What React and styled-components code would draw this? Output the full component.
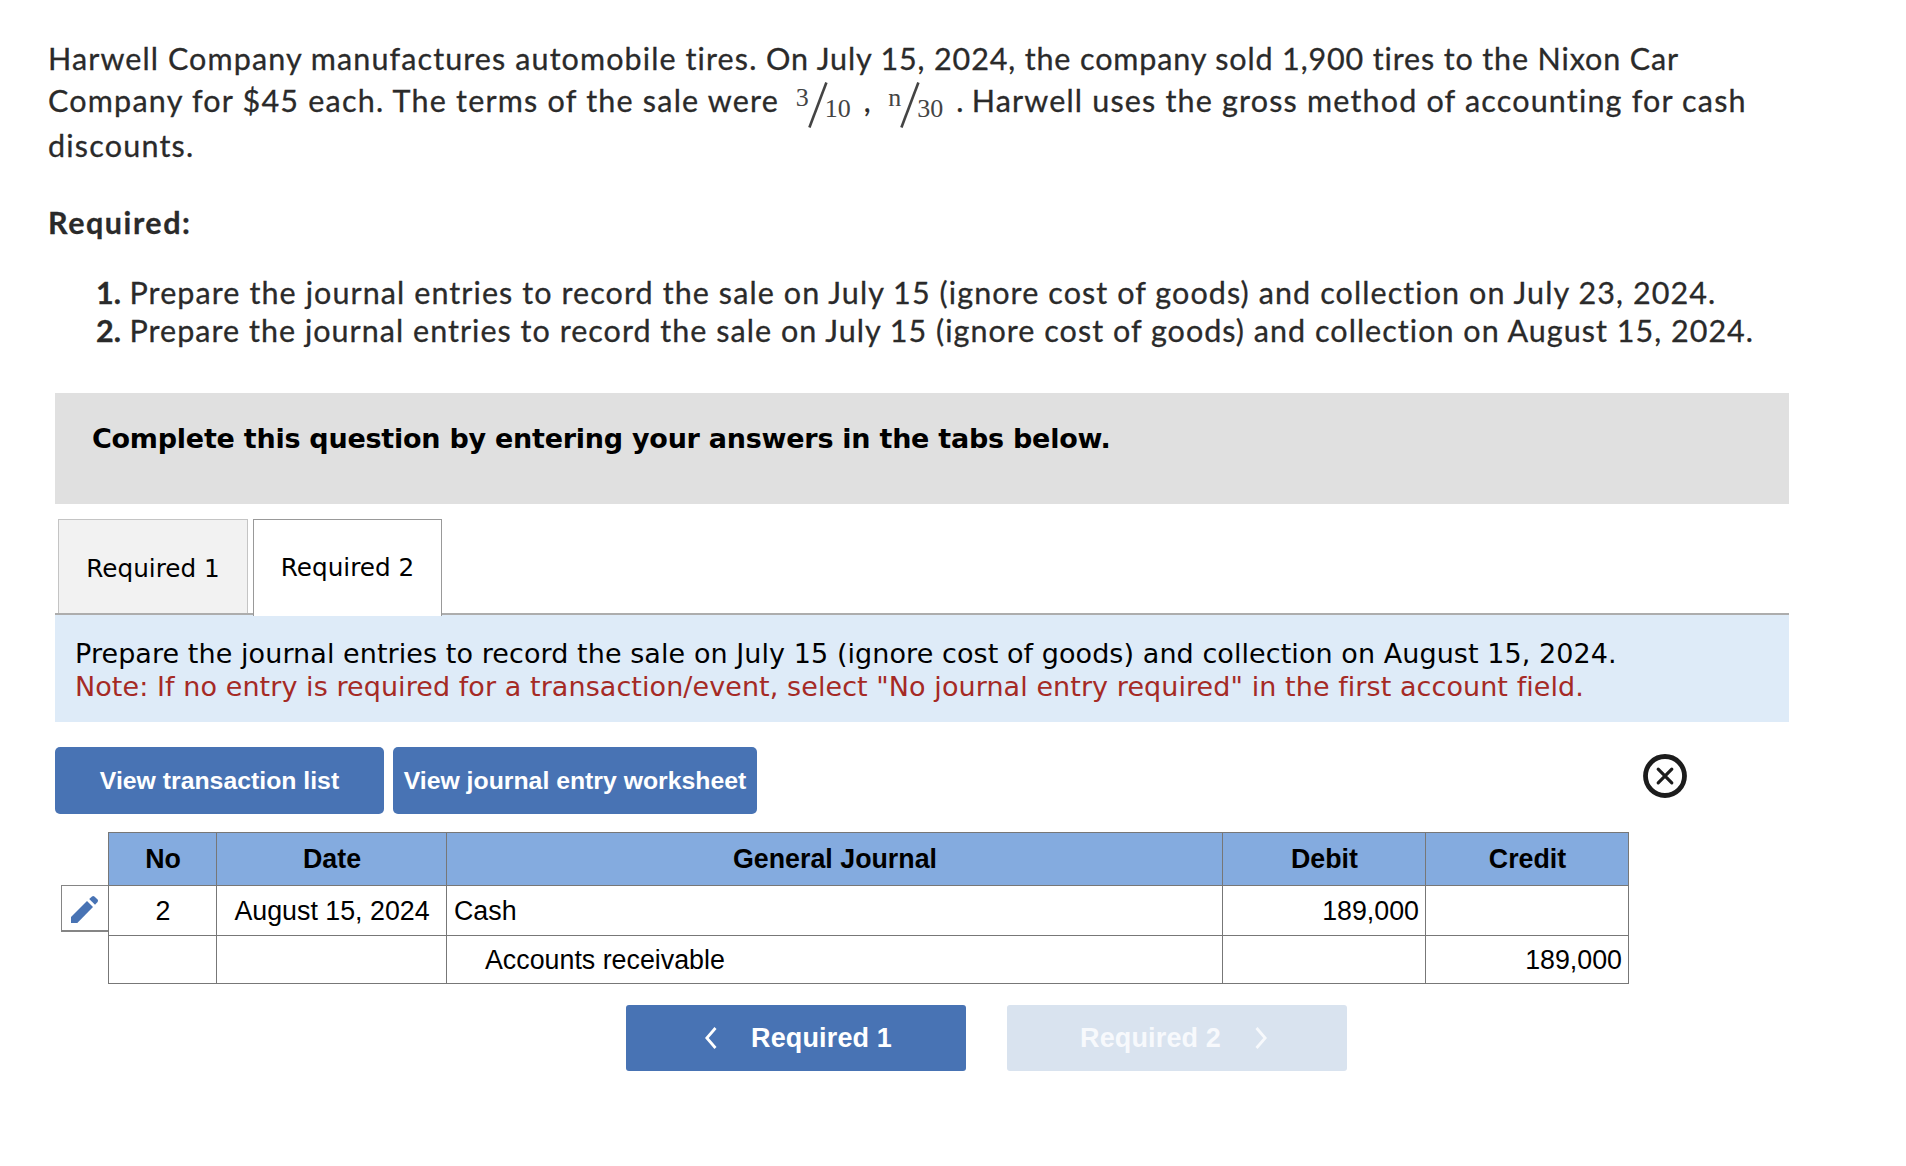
import React from 'react';
import styled, { createGlobalStyle, css } from 'styled-components';

const GlobalStyle = createGlobalStyle`
  *, *::before, *::after {
    box-sizing: border-box;
  }
  body {
    margin: 0;
    background: #fff;
  }
`;

const lato = "Lato, 'Open Sans', sans-serif";
const verdana = "Verdana, 'DejaVu Sans', sans-serif";
const arial = "Arial, 'Liberation Sans', sans-serif";

const Page = styled.main`
  width: 1906px;
  min-height: 1166px;
  padding: 37px 117px 0 48px;
  background: #fff;
  color: #000;
`;

const Question = styled.section`
  font-family: ${lato};
  font-size: 30.5px;
  color: #2a2a2a;
  -webkit-text-stroke: 0.3px #2a2a2a;
`;

const Line = styled.div`
  display: flex;
  align-items: flex-start;
  height: ${({ $height }) => $height}px;
  line-height: ${({ $height }) => $height}px;
  white-space: pre;
`;

const Run = styled.span`
  letter-spacing: ${({ $tracking }) => $tracking}px;
`;

const Punctuation = styled.span`
  width: ${({ $width }) => $width}px;
  padding-left: 13px;
`;

const FractionWrapper = styled.span`
  display: flex;
  align-items: flex-start;
  margin: 2.5px 0 0 ${({ $lead }) => $lead || 0}px;
  font-family: 'Liberation Serif', serif;
  font-size: 26px;
  line-height: 30px;
  color: #444;
  -webkit-text-stroke: 0;

  svg {
    margin: 0 -3px 0 -1px;
  }
`;

const Numerator = styled.span`
  margin-top: 1px;
`;

const Denominator = styled.span`
  margin-top: 12px;
`;

const Required = styled.h2`
  margin: 34px 0 32px;
  font-size: 30.5px;
  font-weight: 700;
  line-height: 40px;
  letter-spacing: 1.55px;
`;

const Steps = styled.ol`
  margin: 0 0 44px;
  padding: 0;
  list-style: none;
`;

const Step = styled.li`
  display: flex;
  height: 37.5px;
  line-height: 37.5px;
  white-space: pre;
`;

const StepNumber = styled.b`
  width: 73px;
  margin-right: 8.5px;
  text-align: right;
`;

const Answer = styled.section`
  width: 1734px;
  margin-left: 7px;
`;

const Banner = styled.div`
  height: 111px;
  padding: 26px 37px;
  background: #e0e0e0;
  font: bold 27px/40px ${verdana};
  letter-spacing: -0.25px;
`;

const Tabs = styled.div`
  display: flex;
  gap: 5px;
  height: 111px;
  padding: 15px 0 0 3px;
  border-bottom: 2px solid #adadad;
`;

const Tab = styled.button`
  width: 190px;
  height: 94px;
  padding: 3px 0 0;
  border: 1px solid #c4c4c4;
  border-bottom: none;
  background: #f2f2f2;
  color: #000;
  font: 24.7px ${verdana};
  ${({ $active }) =>
    $active &&
    css`
      height: 97px;
      padding-bottom: 4px;
      width: 189px;
      border-color: #999;
      background: #fff;
    `}
`;

const Instructions = styled.div`
  height: 107px;
  padding: 22px 20px 0;
  background: #deebf8;
  font: 27px/33px ${verdana};
  letter-spacing: 0.07px;
  white-space: nowrap;
`;

const Note = styled.div`
  color: #a52a25;
`;

const Toolbar = styled.div`
  display: flex;
  gap: 9px;
  margin-top: 25px;
`;

const Button = styled.button`
  display: flex;
  align-items: center;
  justify-content: center;
  width: ${({ $width }) => $width}px;
  height: 67px;
  padding: 0;
  border: none;
  border-radius: 5px;
  background: #4873b4;
  color: #fff;
  font: bold 24.8px ${arial};
`;

const CloseButton = styled.button`
  width: 44px;
  height: 44px;
  margin: 7px 102px 0 auto;
  padding: 0;
  border: none;
  background: none;

  svg {
    display: block;
  }
`;

const Journal = styled.div`
  display: flex;
  margin: 18px 0 0 6px;
`;

const EditButton = styled.button`
  display: flex;
  width: 47px;
  height: 47px;
  margin-top: 53px;
  padding: 10px 0 0 9px;
  border: 1px solid #858585;
  border-right: none;
  border-bottom-width: 2px;
  background: #fff;
`;

const Table = styled.div`
  display: grid;
  grid-template-columns: 108px 230px 776px 203px 203px;
  grid-template-rows: 53px 50px 48px;
  border: solid #777;
  border-width: 1px 0 0 1px;
  font: 26.8px ${arial};
`;

const Cell = styled.div`
  display: flex;
  align-items: center;
  justify-content: ${({ $align }) => $align || 'center'};
  padding: 1px 6px 0 ${({ $indent }) => ($indent ? 38 : 7)}px;
  border: solid #777;
  border-width: 0 1px 1px 0;
`;

const HeadCell = styled(Cell)`
  background: #84abdf;
  font-weight: bold;
`;

const Pager = styled.div`
  display: flex;
  gap: 41px;
  margin: 21px 0 0 571px;
`;

const PagerButton = styled(Button)`
  justify-content: flex-start;
  gap: 34px;
  height: 66px;
  padding-left: ${({ $inset }) => $inset}px;
  border-radius: 3px;
  font-size: 27px;
  letter-spacing: 0.15px;

  &:disabled {
    background: #d9e3ef;
    color: #f7f9fc;
  }
`;

const Fraction = ({ top, bottom, lead }) => (
  <FractionWrapper $lead={lead}>
    <Numerator>{top}</Numerator>
    <svg width="20" height="46" viewBox="0 0 20 46">
      <path d="M18.4 0.5 1.4 45.5" stroke="#444" strokeWidth="2.6" />
    </svg>
    <Denominator>{bottom}</Denominator>
  </FractionWrapper>
);

const Chevron = ({ right }) => (
  <svg width="12" height="22" viewBox="0 0 12 22" fill="none">
    <path d={right ? 'M1.5 1 10.2 11 1.5 21' : 'M10.5 1 1.8 11 10.5 21'} stroke="currentColor" strokeWidth="2.8" />
  </svg>
);

const CloseIcon = () => (
  <svg width="44" height="44" viewBox="0 0 44 44" fill="none" stroke="#1c1c1c">
    <circle cx="22" cy="22" r="19.5" strokeWidth="4.8" />
    <path d="M15.2 15.2 28.8 28.8M28.8 15.2 15.2 28.8" strokeWidth="3.2" strokeLinecap="round" />
  </svg>
);

const PencilIcon = () => (
  <svg width="28" height="28" viewBox="0 0 28 28" fill="#4873b4">
    <path d="M0 21 16 5 22 11 6.3 27H0Z" />
    <path d="M18.2 3 21 .4Q22.2-.4 23.4.4L26.6 3.6Q27.4 4.8 26.6 6L24 8.8Z" />
  </svg>
);

const steps = [
  {
    text: 'Prepare the journal entries to record the sale on July 15 (ignore cost of goods) and collection on July 23, 2024.',
    tracking: 1.085,
  },
  {
    text: 'Prepare the journal entries to record the sale on July 15 (ignore cost of goods) and collection on August 15, 2024.',
    tracking: 1.025,
  },
];

const columns = ['No', 'Date', 'General Journal', 'Debit', 'Credit'];

const entries = [
  { no: '2', date: 'August 15, 2024', account: 'Cash', debit: '189,000', credit: '' },
  { no: '', date: '', account: 'Accounts receivable', debit: '', credit: '189,000' },
];

const App = () => (
  <Page>
    <GlobalStyle />
    <Question>
      <Line $height={42}>
        <Run $tracking={1.1}>Harwell Company manufactures automobile tires.</Run>
        <Run $tracking={0.86}> On July 15, 2024, the company sold 1,900 tires to the Nixon Car</Run>
      </Line>
      <Line $height={43}>
        <Run $tracking={1.22}>Company for $45 each. The terms of the sale were</Run>
        <Fraction top="3" bottom="10" lead={16.5} />
        <Punctuation $width={37.5}>,</Punctuation>
        <Fraction top="n" bottom="30" />
        <Punctuation $width={28.5}>.</Punctuation>
        <Run $tracking={1.18}>Harwell uses the gross method of accounting for cash</Run>
      </Line>
      <Line $height={46}>
        <Run $tracking={1.2}>discounts.</Run>
      </Line>
      <Required>Required:</Required>
      <Steps>
        {steps.map(({ text, tracking }, index) => (
          <Step key={text}>
            <StepNumber>{index + 1}.</StepNumber>
            <Run $tracking={tracking}>{text}</Run>
          </Step>
        ))}
      </Steps>
    </Question>
    <Answer>
      <Banner>Complete this question by entering your answers in the tabs below.</Banner>
      <Tabs>
        <Tab>Required 1</Tab>
        <Tab $active>Required 2</Tab>
      </Tabs>
      <Instructions>
        <div>
          Prepare the journal entries to record the sale on July 15 (ignore cost of goods) and collection on August 15,
          2024.
        </div>
        <Note>
          Note: If no entry is required for a transaction/event, select "No journal entry required" in the first account
          field.
        </Note>
      </Instructions>
      <Toolbar>
        <Button $width={329}>View transaction list</Button>
        <Button $width={364}>View journal entry worksheet</Button>
        <CloseButton aria-label="Close">
          <CloseIcon />
        </CloseButton>
      </Toolbar>
      <Journal>
        <EditButton aria-label="Edit entry">
          <PencilIcon />
        </EditButton>
        <Table>
          {columns.map(name => (
            <HeadCell key={name}>{name}</HeadCell>
          ))}
          {entries.map(({ no, date, account, debit, credit }) => (
            <React.Fragment key={account}>
              <Cell>{no}</Cell>
              <Cell>{date}</Cell>
              <Cell $align="flex-start" $indent={!debit}>
                {account}
              </Cell>
              <Cell $align="flex-end">{debit}</Cell>
              <Cell $align="flex-end">{credit}</Cell>
            </React.Fragment>
          ))}
        </Table>
      </Journal>
      <Pager>
        <PagerButton $width={340} $inset={79}>
          <Chevron />
          Required 1
        </PagerButton>
        <PagerButton $width={340} $inset={73} disabled>
          Required 2
          <Chevron right />
        </PagerButton>
      </Pager>
    </Answer>
  </Page>
);

export default App;
